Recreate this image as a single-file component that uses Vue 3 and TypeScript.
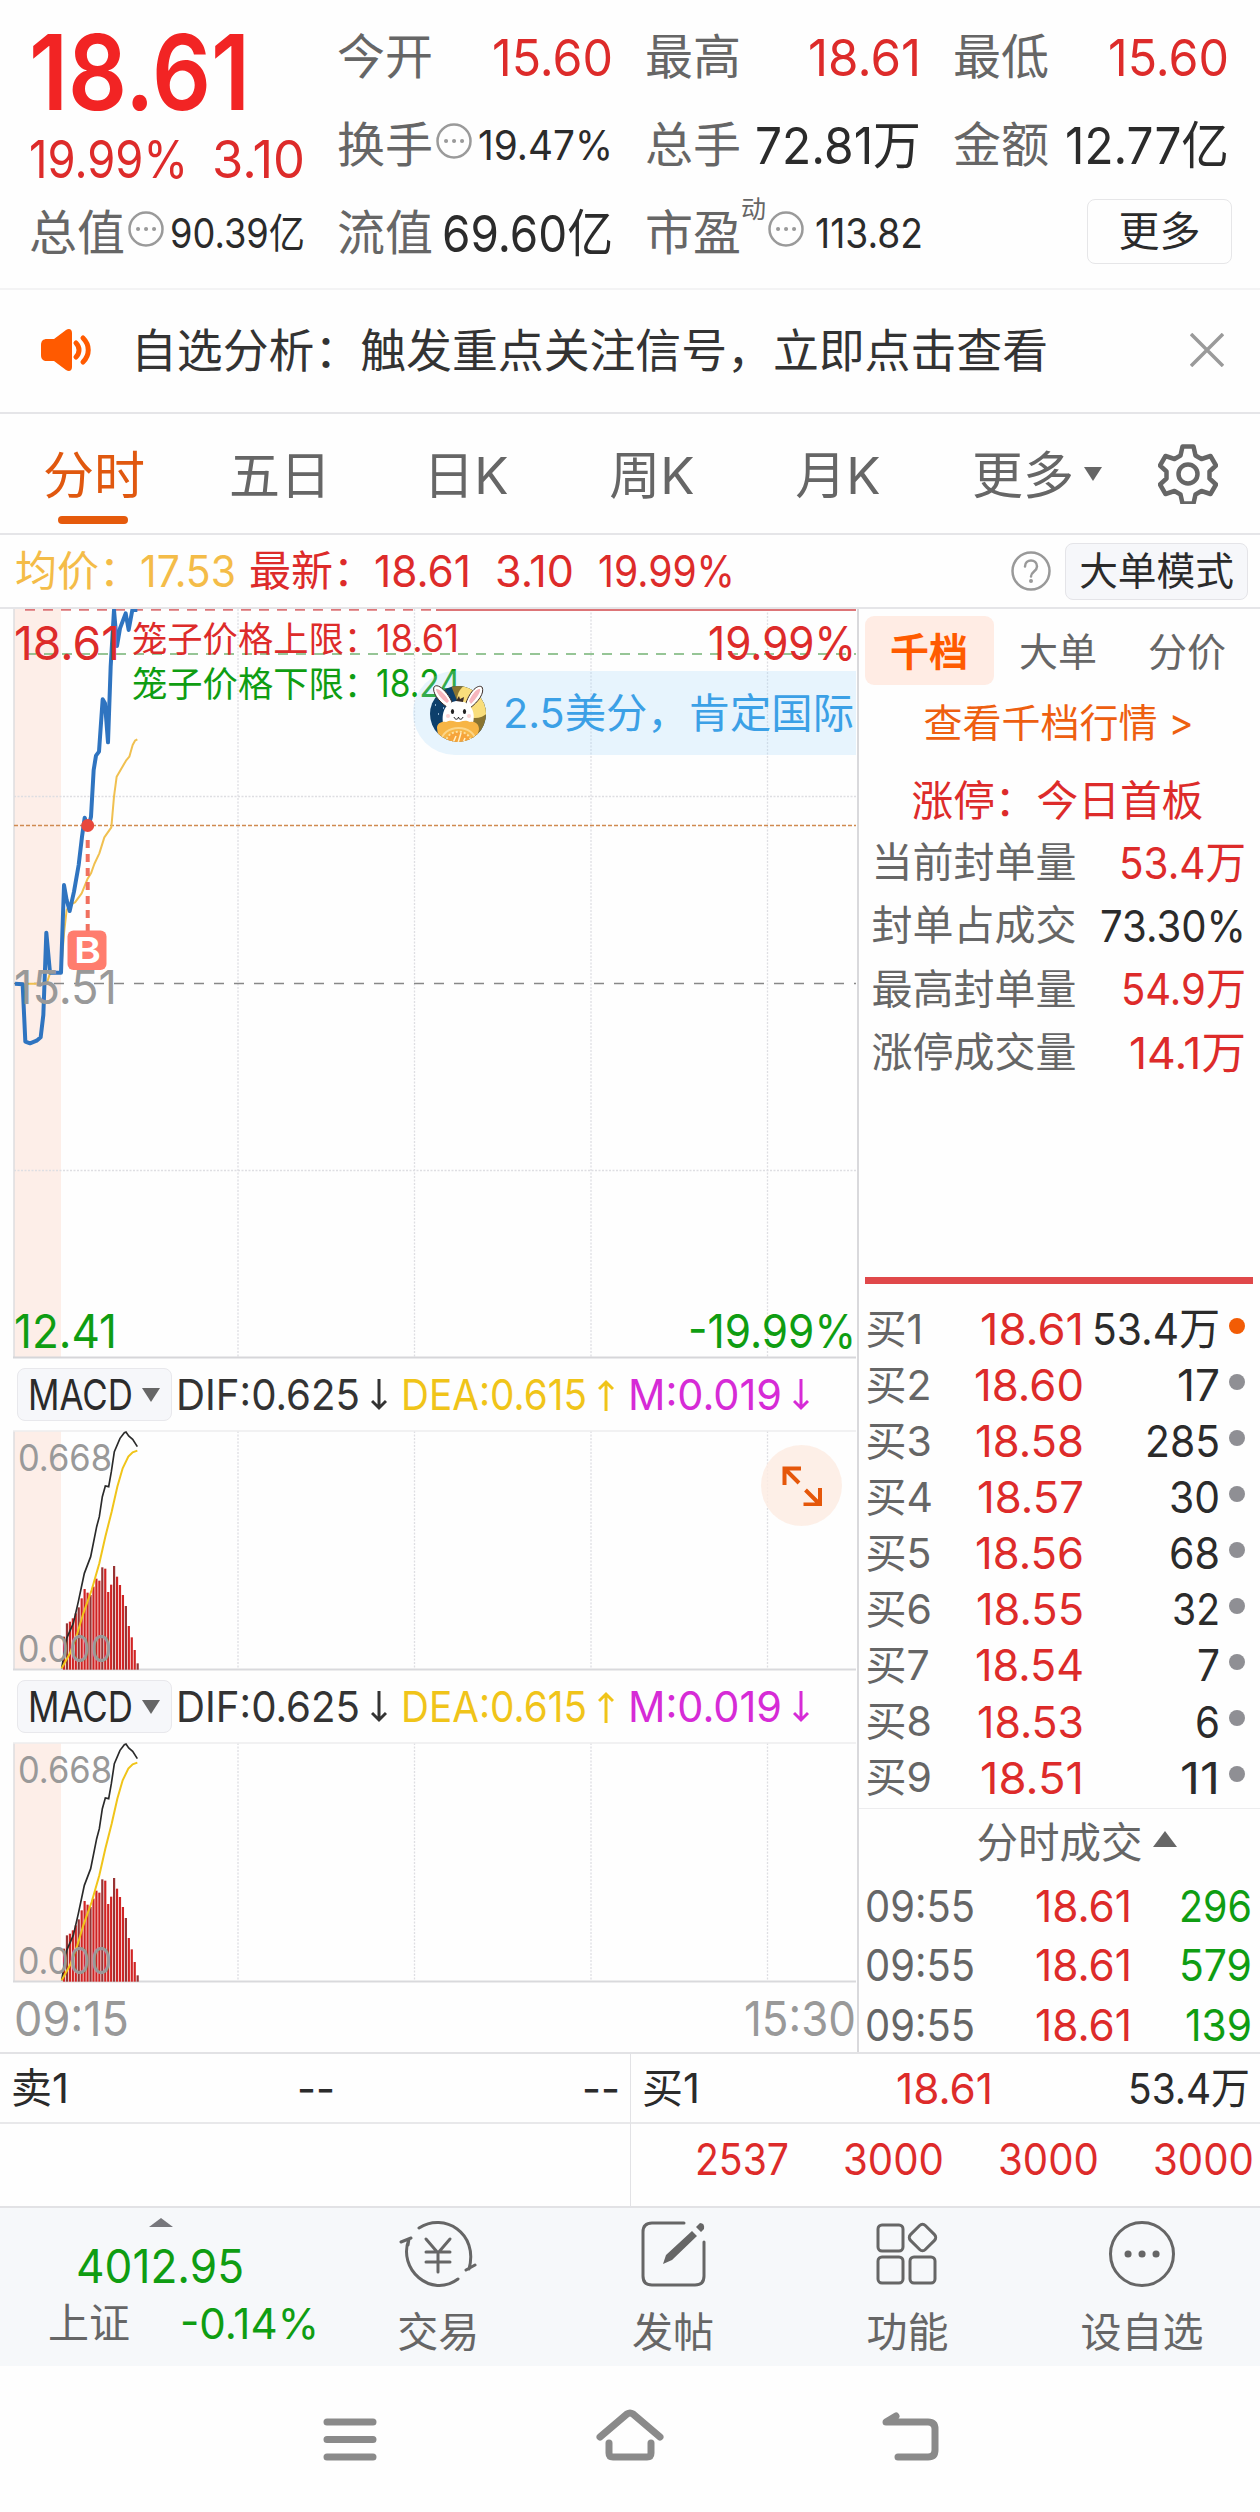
<template>
  <div class="page">
    <!-- Quote summary -->
    <header class="summary">
      <div class="col">
        <div class="price"><b v-fit="221">18.61</b></div>
        <div class="change">
          <span v-fit="159">19.99%</span>
          <span v-fit="93">3.10</span>
        </div>
        <div class="cell">
          <label>总值</label>
          <svg class="dots" viewBox="0 0 36 36"><circle cx="18" cy="18" r="16.5" /><path d="M10 18h.1M18 18h.1M26 18h.1" /></svg>
          <span v-fit="135" class="small">90.39亿</span>
        </div>
      </div>
      <div class="col">
        <div class="cell"><label>今开</label><span v-fit="121" class="red">15.60</span></div>
        <div class="cell">
          <label>换手</label>
          <svg class="dots" viewBox="0 0 36 36"><circle cx="18" cy="18" r="16.5" /><path d="M10 18h.1M18 18h.1M26 18h.1" /></svg>
          <span v-fit="135" class="small">19.47%</span>
        </div>
        <div class="cell"><label>流值</label><span v-fit="171">69.60亿</span></div>
      </div>
      <div class="col">
        <div class="cell"><label>最高</label><span v-fit="113" class="red">18.61</span></div>
        <div class="cell"><label>总手</label><span v-fit="166">72.81万</span></div>
        <div class="cell left">
          <label>市盈</label><sup>动</sup>
          <svg class="dots" viewBox="0 0 36 36"><circle cx="18" cy="18" r="16.5" /><path d="M10 18h.1M18 18h.1M26 18h.1" /></svg>
          <span v-fit="108" class="small pe">113.82</span>
        </div>
      </div>
      <div class="col">
        <div class="cell"><label>最低</label><span v-fit="121" class="red">15.60</span></div>
        <div class="cell"><label>金额</label><span v-fit="164">12.77亿</span></div>
        <div class="cell"><button class="more">更多</button></div>
      </div>
    </header>

    <!-- Notice -->
    <div class="notice">
      <svg class="horn" viewBox="0 0 52 44">
        <path d="M7 11h7L26 2c3-2 6-1 6 3v34c0 4-3 5-6 3L14 33H7c-4 0-6-2-6-6V17c0-4 2-6 6-6z" fill="#ff5a00" />
        <path d="M36 15c4 4 4 10 0 14M43 10c7 7 7 17 0 24" fill="none" stroke="#ff5a00" stroke-width="5" stroke-linecap="round" />
      </svg>
      <p v-fit="917">自选分析：触发重点关注信号，立即点击查看</p>
      <svg class="close" viewBox="0 0 34 34"><path d="M1 1l32 32M33 1L1 33" /></svg>
    </div>

    <!-- Period tabs -->
    <nav class="tabs">
      <span v-for="t in tabs" :key="t" class="tab" :class="{ active: t === '分时' }">{{ t }}</span>
      <span class="tab-more">更多</span>
      <svg class="tri-down" viewBox="0 0 18 14"><path d="M0 0h18L9 14z" /></svg>
      <svg class="gear" viewBox="0 0 60 60">
        <path d="M24.5 2.500h11l2 9 6 3.500 9-3 5.500 9.500-6.500 6v7l6.500 6-5.500 9.500-9-3-6 3.500-2 9h-11l-2-9-6-3.500-9 3L2 40.500l6.500-6v-7L2 21.500 7.500 12l9 3 6-3.500z" />
        <circle cx="30" cy="30" r="9.500" />
      </svg>
    </nav>

    <!-- Latest values -->
    <div class="latest">
      <span class="avg lab">均价：</span><span v-fit="96" class="avg">17.53</span>
      <span class="red lab now">最新：</span><span v-fit="97" class="red">18.61</span>
      <span v-fit="79" class="red diff">3.10</span>
      <span v-fit="137" class="red pct">19.99%</span>
      <svg class="help" viewBox="0 0 40 40">
        <circle cx="20" cy="20" r="18.500" />
        <path d="M14 15.500c0-8 12-8 12 0 0 5-6 5-6 10" /><path d="M20 30v.1" stroke-width="4" />
      </svg>
      <button class="mode">大单模式</button>
    </div>

    <main class="board">
      <section class="charts">
        <div class="main-plot">
          <svg width="857" height="750" viewBox="0 0 857 750">
            <rect x="14" y="0" width="47" height="748" fill="#fdeee8" />
            <g class="grid">
              <path v-for="x in gridX" :key="x" :d="`M${x} 0V748`" />
              <path d="M14 187.500H856M14 561.500H856" />
            </g>
            <path d="M14 0V749" stroke="#dcdcdf" stroke-width="1.500" />
            <path d="M13 748.500H856" stroke="#d6d6d9" stroke-width="2" />
            <path d="M25 .8H436" stroke="#dd7578" stroke-width="2" stroke-dasharray="10 8" />
            <path d="M436 .8H856" stroke="#dd7578" stroke-width="2.500" />
            <path d="M14 216.500H856" stroke="#d08a50" stroke-width="1.500" stroke-dasharray="4 2" />
            <path d="M14 374.500H856" stroke="#888" stroke-width="1.600" stroke-dasharray="10 10" />
            <!-- price curves are plotted on a 3x grid -->
            <g transform="translate(0 -19) scale(.33333)" fill="none" stroke-linejoin="round">
              <polyline :points="avgLine" stroke="#f0c050" stroke-width="6" />
              <polyline :points="priceLine" stroke="#2f74c0" stroke-width="12" />
            </g>
            <path d="M26 45H856" stroke="#74b274" stroke-width="1.600" stroke-dasharray="10 8" />
            <path d="M87.700 226V323" stroke="#f0705f" stroke-width="4" stroke-dasharray="8 6" stroke-dashoffset="-5" />
            <circle cx="87.700" cy="216.500" r="6.500" fill="#e8483c" />
            <rect x="67.500" y="321.500" width="39" height="39.500" rx="6" fill="#ff7d6e" />
            <text x="74" y="354" textLength="27" lengthAdjust="spacingAndGlyphs" font-size="36" font-weight="600" fill="#fff">B</text>
            <g font-size="47">
              <text x="14" y="50.500" textLength="106" lengthAdjust="spacingAndGlyphs" fill="#dd2b2a">18.61</text>
              <text x="14" y="395" textLength="103" lengthAdjust="spacingAndGlyphs" fill="#999">15.51</text>
              <text x="14" y="738.500" textLength="103" lengthAdjust="spacingAndGlyphs" fill="#0f9d12">12.41</text>
              <text x="708" y="50.500" textLength="148" lengthAdjust="spacingAndGlyphs" fill="#dd2b2a">19.99%</text>
              <text x="688" y="738.500" textLength="168" lengthAdjust="spacingAndGlyphs" fill="#0f9d12">-19.99%</text>
            </g>
            <g font-size="35.300">
              <text x="132" y="43" fill="#dd2b2a">笼子价格上限：</text>
              <text x="376" y="43" textLength="83" lengthAdjust="spacingAndGlyphs" font-size="38" fill="#dd2b2a">18.61</text>
              <text x="132" y="88" fill="#0f9d12">笼子价格下限：</text>
              <text x="376" y="88" textLength="85" lengthAdjust="spacingAndGlyphs" font-size="38" fill="#0f9d12">18.24</text>
            </g>
          </svg>
          <div class="news">
            <svg class="rabbit" viewBox="0 0 56 60">
              <defs><clipPath id="face"><circle cx="28" cy="31" r="28" /></clipPath></defs>
              <g clip-path="url(#face)">
                <rect width="56" height="60" fill="#0d3f6b" />
                <path d="M20 0h40v60H44z" fill="#8a7430" />
                <circle cx="45" cy="17" r="18" fill="#f9de7c" />
                <path d="M5 22h1M10 14h1M8 31h1M13 25h1" stroke="#b9d6ee" stroke-width="1.500" />
              </g>
              <g fill="#fff" stroke="#3b2c28" stroke-width="1">
                <path d="M17 24C8 18 2 9 4 4c4-5 14 6 18 15z" />
                <path d="M36 20C40 8 48 1 52 4c3 6-4 15-12 21z" />
                <path d="M13 40c-2-12 4-22 15-22 12 0 18 10 15 22z" stroke="none" />
              </g>
              <path d="M17 20C11 16 6 9 6 6c3-1 10 6 13 12zM39 18c3-7 8-13 11-12 1 3-4 10-9 15z" fill="#f7b6be" />
              <path d="M26 18l3-5 1 3 4-2-1 5z" fill="#3b2c28" />
              <ellipse cx="22.500" cy="28.500" rx="1.600" ry="2.500" fill="#222" /><ellipse cx="34.500" cy="28.500" rx="1.600" ry="2.500" fill="#222" />
              <circle cx="18" cy="33" r="2" fill="#fbd3d3" /><circle cx="39" cy="33" r="2" fill="#fbd3d3" />
              <path d="M24 34c1 3 4 3 4.500 0 .5 3 3.500 3 4.500 0" fill="none" stroke="#222" />
              <g clip-path="url(#face)">
                <path d="M7 45c0-5 5-7 9-6 5-3 10 0 12 0s7-3 12 0c5-1 9 2 9 7l-3 14H9z" fill="#f7b545" />
                <path d="M11 60c0-20 35-20 35 0" fill="none" stroke="#fbd68a" stroke-width="2" />
                <path d="M16 60c0-15 25-15 25 0z" fill="#f6a43a" stroke="#fce0a0" stroke-width="2" stroke-dasharray="2 2" />
                <path d="M28 60l3-10M23 60l3-7M33 60l2-5" stroke="#fff0c4" stroke-width="1.500" />
              </g>
            </svg>
            <span v-fit="351">2.5美分，肯定国际</span>
          </div>
        </div>

        <template v-for="n in 2" :key="n">
          <div class="macd-head">
            <button class="macd">
              <span v-fit="105">MACD</span>
              <svg class="tri" viewBox="0 0 18 14"><path d="M0 0h18L9 14z" /></svg>
            </button>
            <span v-fit="184" class="dif">DIF:0.625</span>
            <svg class="arrow dif" viewBox="0 0 16 32"><path d="M8 0v29M1 22l7 7 7-7" /></svg>
            <span v-fit="186" class="dea">DEA:0.615</span>
            <svg class="arrow dea" viewBox="0 0 16 32"><path d="M8 32V3M1 10l7-7 7 7" /></svg>
            <span v-fit="154" class="m">M:0.019</span>
            <svg class="arrow m" viewBox="0 0 16 32"><path d="M8 0v29M1 22l7 7 7-7" /></svg>
          </div>
          <div class="macd-plot">
            <svg width="857" height="241" viewBox="0 0 857 241">
              <rect x="14" y="1" width="47" height="238" fill="#fdeee8" />
              <g class="grid"><path v-for="x in gridX" :key="x" :d="`M${x} 1V239`" /></g>
              <path d="M14 1V240" stroke="#dcdcdf" stroke-width="1.500" />
              <path d="M13 1H856" stroke="#ececee" stroke-width="1.500" />
              <path d="M13 239.500H856" stroke="#d9d9dc" stroke-width="2" />
              <g transform="translate(0 -140) scale(.33333)" fill="none">
                <path
                  v-for="(y, i) in bars" :key="i" :d="`M${192 + i * 8.840} 1139V${y}`"
                  :stroke="i % 4 === 1 ? '#983434' : '#d02424'" stroke-width="6.6"
                />
                <polyline :points="difLine" stroke="#2a2a2a" stroke-width="5" />
                <polyline :points="deaLine" stroke="#f0c419" stroke-width="6" />
              </g>
              <text x="18" y="40.500" font-size="37" textLength="94" lengthAdjust="spacingAndGlyphs" fill="#999">0.668</text>
              <text x="18" y="232" font-size="37" textLength="94" lengthAdjust="spacingAndGlyphs" fill="#999">0.000</text>
            </svg>
            <span v-if="n === 1" class="expand">
              <svg width="40" height="40" viewBox="0 0 40 40"><path d="M2.500 19V2.500H19M3 3l14 14M38 22v16.500H21.500M37.500 38L23.500 24" /></svg>
            </span>
          </div>
        </template>

        <div class="times"><span v-fit="115">09:15</span><span v-fit="112">15:30</span></div>
      </section>

      <!-- Order book -->
      <aside class="book">
        <div class="book-tabs"><b>千档</b><span>大单</span><span>分价</span></div>
        <div class="book-link">查看千档行情<i>&gt;</i></div>
        <div class="limit-title">涨停：今日首板</div>
        <div v-for="s in seals" :key="s.label" class="seal">
          <span>{{ s.label }}</span>
          <em v-fit="s.w" :class="{ red: s.red }">{{ s.value }}</em>
        </div>
        <div class="bar"></div>
        <div v-for="(b, i) in bids" :key="b.price" class="bid">
          <span class="name">买{{ i + 1 }}</span>
          <span class="p"><span v-fit="b.pw" class="red">{{ b.price }}</span></span>
          <span class="v"><span v-fit="b.vw">{{ b.vol }}</span></span>
          <i :class="{ hot: i === 0 }"></i>
        </div>
        <div class="deals-title">
          <span>分时成交</span>
          <svg viewBox="0 0 24 16"><path d="M0 16L12 0l12 16z" /></svg>
        </div>
        <div v-for="d in deals" :key="d.vol" class="deal">
          <span v-fit="110">09:55</span>
          <span v-fit="97" class="red">18.61</span>
          <span class="v"><span v-fit="d.w">{{ d.vol }}</span></span>
        </div>
      </aside>
    </main>

    <!-- Best ask and bid -->
    <div class="best">
      <div class="half">
        <div class="line ask"><span>卖<span v-fit="17">1</span></span><span v-fit="38">--</span><span v-fit="38">--</span></div>
        <div class="queue"></div>
      </div>
      <div class="half">
        <div class="line"><span>买<span v-fit="17">1</span></span><span v-fit="97" class="red">18.61</span><span v-fit="122">53.4万</span></div>
        <div class="queue">
          <span v-fit="94">2537</span><span v-fit="101">3000</span><span v-fit="101">3000</span><span v-fit="101">3000</span>
        </div>
      </div>
    </div>

    <footer class="actions">
      <div class="index">
        <svg class="caret" viewBox="0 0 24 9"><path d="M0 9L12 0l12 9z" /></svg>
        <div class="index-value"><span v-fit="168">4012.95</span></div>
        <div class="index-row"><label>上证</label><span v-fit="139">-0.14%</span></div>
      </div>
      <div class="action">
        <svg viewBox="0 0 78 70">
          <path d="M20 9C45-7 80 14 70 50M59 60C32 80-2 50 10 20M2 23l10-4M76 46l-9 5M10 20l-1 6" />
          <path d="M27 20l12 14 12-14M27 33h24M27 43h24M39 33v20" />
        </svg>
        <span>交易</span>
      </div>
      <div class="action">
        <svg viewBox="0 0 78 70">
          <path d="M50 4H18q-9 0-9 9v44q0 9 9 9h43q9 0 9-9V23" />
          <path d="M29 45l3-9L58 12l5 5-25 24zM62 8l4-4q5 0 4 6l-3 3z" fill="#666" stroke="none" />
        </svg>
        <span>发帖</span>
      </div>
      <div class="action">
        <svg viewBox="0 0 78 70">
          <rect x="10" y="6" width="25" height="26" rx="4" /><rect x="10" y="38" width="25" height="26" rx="4" />
          <rect x="42" y="38" width="25" height="26" rx="4" /><rect x="44" y="8" width="21" height="21" rx="4" transform="rotate(45 54.500 18.500)" />
        </svg>
        <span>功能</span>
      </div>
      <div class="action">
        <svg viewBox="0 0 78 70">
          <circle cx="39" cy="35" r="31.500" /><path d="M25 35h.1M39 35h.1M53 35h.1" stroke-width="7" />
        </svg>
        <span>设自选</span>
      </div>
    </footer>

    <div class="system">
      <svg viewBox="0 0 68 56"><path d="M11 13h46M11 30.500h46M11 48h46" /></svg>
      <svg viewBox="0 0 68 56"><path d="M4 28L31 5q3-2 6 0l27 23M13 34v10q0 4 4 4h34q4 0 4-4V34" /></svg>
      <svg viewBox="0 0 68 56"><path d="M22 48h30q7 0 7-7V20q0-7-7-7H10l10-6" /></svg>
    </div>
  </div>
</template>

<script setup lang="ts">
// Scales a piece of text horizontally so that it fills exactly the given width
const vFit = {
  mounted(el: HTMLElement, binding: { value: number }) {
    el.style.display = "inline-block";
    const natural = el.getBoundingClientRect().width;
    el.style.width = `${binding.value}px`;
    el.style.transform = `scaleX(${binding.value / natural})`;
  },
};

const tabs = ["分时", "五日", "日K", "周K", "月K"];

const gridX = [238, 414.5, 591, 767.5];

const priceLine =
  "45,1181 68,1183 76,1355 90,1360 110,1352 122,1342 130,1275 139,1028 150,1148 183,1148 192,885 200,930 209,963 222,905 236,825 246,740 254,683 264,715 273,680 281,540 288,497 297,485 308,328 315,340 324,457 332,230 342,60 351,168 360,115 377,70 386,120 397,60 412,60";

const avgLine =
  "45,1181 140,1181 150,1150 183,1148 192,1030 200,960 209,945 225,937 245,910 262,868 273,850 283,822 298,790 313,742 334,712 342,620 350,560 378,512 388,500 398,465 405,452 412,448";

const difLine =
  "185,1135 200,1045 220,1000 235,935 253,850 272,800 290,710 298,680 307,620 316,588 326,590 334,545 343,485 360,445 373,428 378,426 386,438 398,448 412,470";

const deaLine =
  "185,1135 210,1090 232,1030 250,970 275,900 298,820 316,740 335,665 352,590 368,535 385,500 398,487 412,482";

const bars = [
  1040, 1000, 995, 985, 970, 952, 925, 897, 908, 915, 890, 866, 872,
  832, 836, 906, 884, 828, 860, 885, 915, 948, 1008, 1042, 1080, 1120,
];

const seals = [
  { label: "当前封单量", value: "53.4万", w: 127, red: true },
  { label: "封单占成交", value: "73.30%", w: 146, red: false },
  { label: "最高封单量", value: "54.9万", w: 125, red: true },
  { label: "涨停成交量", value: "14.1万", w: 117, red: true },
];

const bids = [
  { price: "18.61", pw: 104, vol: "53.4万", vw: 128 },
  { price: "18.60", pw: 110, vol: "17", vw: 43 },
  { price: "18.58", pw: 109, vol: "285", vw: 75 },
  { price: "18.57", pw: 107, vol: "30", vw: 51 },
  { price: "18.56", pw: 109, vol: "68", vw: 51 },
  { price: "18.55", pw: 108, vol: "32", vw: 48 },
  { price: "18.54", pw: 109, vol: "7", vw: 23 },
  { price: "18.53", pw: 107, vol: "6", vw: 25 },
  { price: "18.51", pw: 104, vol: "11", vw: 40 },
];

const deals = [
  { vol: "296", w: 73 },
  { vol: "579", w: 73 },
  { vol: "139", w: 67 },
];
</script>

<style>
body {
  background: #fefefe;
}
</style>

<style scoped>
.page {
  width: 1260px;
  height: 2512px;
  overflow: hidden;
  background: #fefefe;
  font-family: Inter, "Noto Sans CJK SC", sans-serif;
  font-size: 42px;
  line-height: 1;
  color: #2b2b2b;
  white-space: nowrap;
}

.page * {
  box-sizing: border-box;
}

span,
b,
p,
em {
  transform-origin: 0 50%;
}

p {
  margin: 0;
}

em,
i {
  font-style: normal;
}

button {
  font: inherit;
  color: inherit;
  padding: 0;
}

svg {
  display: block;
  flex: none;
}

.red {
  color: #dd2b2a;
}

/* Summary */
.summary {
  height: 290px;
  padding: 13px 30px 0 29px;
  display: grid;
  grid-template-columns: repeat(4, 276px);
  column-gap: 32px;
  align-content: start;
  border-bottom: 2px solid #f3f3f4;
}

.price {
  height: 118px;
  display: flex;
  align-items: center;
  font-size: 104px;
  color: #f22424;
}

.price b {
  font-weight: 600;
}

.change {
  height: 58px;
  display: flex;
  align-items: center;
  justify-content: space-between;
  font-size: 52px;
  color: #dd2b2a;
}

.cell {
  height: 88px;
  display: flex;
  align-items: center;
  justify-content: space-between;
  font-size: 51px;
}

.cell label {
  font-size: 48px;
  color: #666;
}

.cell .small {
  font-size: 41px;
}

.cell.left {
  justify-content: flex-start;
}

.cell .pe {
  margin-left: 11px;
}

.cell sup {
  align-self: flex-start;
  margin: 8px 2px 0 0;
  font-size: 25px;
  color: #666;
}

.dots {
  width: 36px;
  height: 36px;
  margin: -8px 4px 0 0;
  fill: none;
  stroke: #9a9a9a;
  stroke-width: 2.5;
}

.cell.left .dots {
  margin-right: 0;
}

.dots path {
  stroke-width: 4;
  stroke-linecap: round;
}

.more {
  width: 145px;
  height: 65px;
  margin: -4px -3px 0 auto;
  border: 1.5px solid #e6e6e8;
  border-radius: 8px;
  background: transparent;
  font-size: 41px;
}

/* Notice */
.notice {
  height: 124px;
  padding: 0 36px 2px 40px;
  display: flex;
  align-items: center;
  border-bottom: 2px solid #e5e5e8;
  font-size: 46px;
  color: #333;
}

.horn {
  width: 52px;
  height: 44px;
  margin-right: 39px;
}

.close {
  width: 34px;
  height: 34px;
  margin-left: auto;
  fill: none;
  stroke: #9a9a9a;
  stroke-width: 3.5;
}

/* Tabs */
.tabs {
  height: 121px;
  padding-left: 1px;
  display: flex;
  align-items: center;
  border-bottom: 2px solid #e5e5e8;
  font-size: 51px;
  color: #666;
}

.tab {
  width: 186px;
  height: 119px;
  padding-top: 4px;
  display: flex;
  align-items: center;
  justify-content: center;
}

.tab.active {
  position: relative;
  color: #e0580f;
}

.tab.active::after {
  content: "";
  position: absolute;
  left: 57px;
  bottom: 9px;
  width: 70px;
  height: 8px;
  border-radius: 4px;
  background: #e55a0c;
}

.tab-more {
  margin-left: 41px;
  padding-top: 4px;
}

.tri-down {
  width: 18px;
  height: 14px;
  margin-left: 10px;
  fill: #666;
}

.gear {
  width: 60px;
  height: 60px;
  margin-left: auto;
  margin-right: 42px;
  fill: none;
  stroke: #666;
  stroke-width: 4.5;
  stroke-linejoin: round;
}

/* Latest */
.latest {
  height: 74px;
  padding: 0 12px 0 15px;
  display: flex;
  align-items: center;
  border-bottom: 2px solid #e5e5e8;
  font-size: 44px;
}

.latest .lab {
  width: 125px;
  font-size: 42px;
}

.avg {
  color: #f4bc48;
}

.latest .now {
  margin-left: 13px;
}

.diff {
  margin-left: 24px;
}

.pct {
  margin-left: 24px;
}

.help {
  width: 40px;
  height: 40px;
  margin-left: auto;
  margin-right: 14px;
  fill: none;
  stroke: #999;
  stroke-width: 2.5;
  stroke-linecap: round;
}

.mode {
  width: 183px;
  height: 57px;
  border: 1.5px solid #e4e4e8;
  border-radius: 8px;
  background: #f6f7fa;
  font-size: 38.7px;
}

/* Charts */
.board {
  height: 1445px;
  display: flex;
  border-bottom: 2px solid #e2e2e5;
}

.charts {
  width: 858.5px;
  border-right: 2px solid #d9d9dc;
}

.grid path {
  stroke: #dedee2;
  stroke-width: 1.3;
  stroke-dasharray: 2 1.5;
}

.main-plot {
  position: relative;
  height: 750px;
}

.news {
  position: absolute;
  left: 413px;
  top: 62px;
  width: 443px;
  height: 84px;
  padding-left: 17px;
  display: flex;
  align-items: center;
  border-radius: 42px 0 0 42px;
  background: rgba(165, 217, 250, 0.25);
  font-size: 41px;
  color: #3ba0e6;
}

.rabbit {
  width: 56px;
  height: 60px;
  margin-right: 17px;
}

.macd-head {
  height: 71px;
  padding-left: 17px;
  display: flex;
  align-items: center;
  font-size: 43px;
}

.macd {
  width: 155px;
  height: 53px;
  margin-right: 4px;
  padding-left: 10px;
  display: flex;
  align-items: center;
  border: 1.5px solid #e8e8ec;
  border-radius: 8px;
  background: #f6f7fa;
}

.macd .tri {
  width: 18px;
  height: 14px;
  margin-left: 9px;
  fill: #666;
}

.dif {
  color: #333;
}

.dea {
  color: #f0c419;
}

.m {
  color: #d62bd6;
}

.arrow {
  width: 16px;
  height: 32px;
  margin: 0 14px 0 11px;
  fill: none;
  stroke: currentColor;
  stroke-width: 3;
}

.macd-plot {
  position: relative;
  height: 241px;
}

.expand {
  position: absolute;
  left: 761px;
  top: 15px;
  width: 81px;
  height: 81px;
  display: flex;
  align-items: center;
  justify-content: center;
  border-radius: 50%;
  background: rgba(253, 236, 227, 0.85);
}

.expand path {
  fill: none;
  stroke: #e5570a;
  stroke-width: 4;
}

.times {
  height: 70px;
  padding: 2px 1px 0 14px;
  display: flex;
  align-items: center;
  justify-content: space-between;
  font-size: 48px;
  color: #999;
}

/* Order book */
.book {
  width: 401px;
  font-size: 44px;
}

.book-tabs {
  margin: 7px 0 0 6px;
  height: 69px;
  display: flex;
  font-size: 39px;
  color: #666;
}

.book-tabs > * {
  width: 129px;
  padding-top: 2px;
  display: flex;
  align-items: center;
  justify-content: center;
}

.book-tabs b {
  border-radius: 9px;
  background: #ffece4;
  color: #ff5b00;
}

.book-link {
  height: 76px;
  padding: 0 0 2px 65px;
  display: flex;
  align-items: center;
  font-size: 39px;
  color: #ee5f10;
}

.book-link i {
  margin-left: 11px;
  font-size: 38px;
}

.limit-title {
  height: 70px;
  padding: 11px 0 0 53px;
  display: flex;
  align-items: center;
  font-size: 41.7px;
  color: #dd2b2a;
}

.seal {
  height: 63.3px;
  padding: 0 14px 0 13px;
  display: flex;
  align-items: center;
  justify-content: space-between;
}

.seal span {
  font-size: 41px;
  color: #666;
}

.bar {
  width: 388px;
  height: 7px;
  margin: 193px 0 0 6px;
  background: #e0484a;
}

.bid {
  height: 56.05px;
  padding-left: 7px;
  display: flex;
  align-items: center;
}

.bar + .bid {
  margin-top: 17px;
}

.bid .name {
  width: 78px;
  color: #666;
  font-size: 41px;
}

.bid .p {
  width: 140px;
  display: flex;
  justify-content: flex-end;
}

.bid .v {
  width: 136px;
  display: flex;
  justify-content: flex-end;
}

.bid i {
  width: 16px;
  height: 16px;
  margin: -7px 0 0 9px;
  border-radius: 50%;
  background: #8f8f94;
}

.bid i.hot {
  background: #f25c05;
}

.deals-title {
  height: 69px;
  display: flex;
  align-items: center;
  padding: 2px 0 0 118px;
  margin-top: 2px;
  border-top: 1.5px solid #ececee;
  font-size: 41.5px;
  color: #666;
}

.deals-title svg {
  width: 24px;
  height: 16px;
  margin: -10px 0 0 10px;
  fill: #666;
}

.deal {
  height: 59.2px;
  padding: 0 8px 0 6px;
  display: flex;
  align-items: center;
  color: #666;
}

.deal .red {
  color: #dd2b2a;
  margin-left: 60px;
}

.deal .v {
  flex: 1;
  display: flex;
  justify-content: flex-end;
  color: #0f9d12;
}

/* Best quotes */
.best {
  display: flex;
}

.half {
  width: 630px;
}

.half + .half {
  border-left: 1.5px solid #e2e2e5;
}

.line {
  height: 70px;
  padding: 0 10px 0 11px;
  display: flex;
  align-items: center;
  justify-content: space-between;
  border-bottom: 2px solid #e8e8ea;
  font-size: 43px;
}

.line > span:first-child {
  width: 118px;
  font-size: 41px;
}

.line.ask > span:first-child {
  width: 38px;
}

.queue {
  height: 84px;
  padding: 0 6px 13px 0;
  display: flex;
  align-items: center;
  justify-content: flex-end;
  gap: 54px;
  border-bottom: 2px solid #e2e2e5;
  font-size: 44px;
  color: #dd2b2a;
}

/* Bottom bar */
.actions {
  height: 158px;
  display: flex;
  background: #f6f8fa;
}

.index {
  width: 321px;
  padding-top: 10px;
  color: #0f9d12;
}

.caret {
  width: 24px;
  height: 9px;
  margin-left: 149px;
  fill: #77777c;
}

.index-value {
  height: 64px;
  margin-top: 6px;
  padding-left: 76px;
  display: flex;
  align-items: center;
  font-size: 47px;
}

.index-row {
  height: 52px;
  padding: 0 2px 0 48px;
  display: flex;
  align-items: center;
  justify-content: space-between;
  font-size: 43px;
}

.index-row label {
  font-size: 41px;
  color: #666;
}

.action {
  width: 234.6px;
  padding-top: 11px;
  display: flex;
  flex-direction: column;
  align-items: center;
  font-size: 41px;
  color: #666;
}

.action svg {
  width: 78px;
  height: 70px;
  margin-bottom: 23px;
  fill: none;
  stroke: #666;
  stroke-width: 3;
  stroke-linecap: round;
}

.system {
  height: 146px;
  padding: 43px 316px 0;
  display: flex;
  justify-content: space-between;
}

.system svg {
  width: 68px;
  height: 56px;
  fill: none;
  stroke: #8a8a8a;
  stroke-width: 7;
  stroke-linecap: round;
  stroke-linejoin: round;
}
</style>
